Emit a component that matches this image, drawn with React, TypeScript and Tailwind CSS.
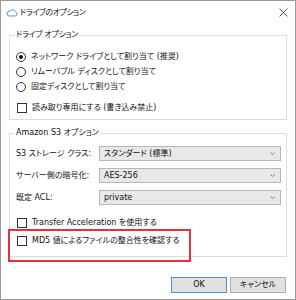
import React from "react";

function Radio({ checked }: { checked?: boolean }) {
  return (
    <span className="w-[10px] h-[10px] rounded-full border border-[#333] bg-white flex items-center justify-center shrink-0">
      {checked && <span className="w-[4px] h-[4px] rounded-full bg-[#111]" />}
    </span>
  );
}

function Check() {
  return <span className="w-[10px] h-[10px] border border-[#333] bg-white shrink-0" />;
}

function Select({ value }: { value: string }) {
  return (
    <div className="w-[182px] h-[15px] shrink-0 border border-[#b7b7b7] bg-[#e8e8e8] flex items-center justify-between pl-[4px] pr-[5px]">
      <span className="text-[8px] leading-none whitespace-nowrap">{value}</span>
      <svg width="5" height="3" viewBox="0 0 5 3"><path d="M0.5 0.5 L2.5 2.5 L4.5 0.5" fill="none" stroke="#777" strokeWidth="0.9" /></svg>
    </div>
  );
}

function Row({ children, className = "" }: { children: React.ReactNode; className?: string }) {
  return <label className={`h-[15px] flex items-center text-[8px] leading-none whitespace-nowrap ${className}`}>{children}</label>;
}

export default function App() {
  return (
    <div className="w-[296px] h-[300px] bg-white border border-[#9a9a9a] relative flex flex-col text-[#111] overflow-hidden font-['DejaVu_Sans','Noto_Sans_CJK_JP',sans-serif] [font-feature-settings:'palt']">
      <div className="h-[23px] flex items-center pl-[5px] pr-[7px] shrink-0">
        <svg width="12" height="9" viewBox="0 0 12 9" className="mr-[2px]">
          <path d="M3 8 H9.3 A2.1 2.1 0 0 0 9.5 3.9 A3 3 0 0 0 4 3.2 A2.4 2.4 0 0 0 3 8 Z" fill="none" stroke="#3a8ad8" strokeWidth="0.9" />
        </svg>
        <span className="text-[8px] leading-none tracking-[-0.5px]">ドライブのオプション</span>
        <svg width="9" height="9" viewBox="0 0 9 9" className="ml-auto">
          <path d="M0.5 0.5 L8.5 8.5 M8.5 0.5 L0.5 8.5" stroke="#444" strokeWidth="0.9" />
        </svg>
      </div>

      <div className="px-[8px] flex flex-col">
        <fieldset className="border border-[#dcdcdc] mt-[5px] pl-[6px] pr-[6px] pb-[4px]">
          <legend className="text-[8px] leading-[12px] px-[1px] -ml-[1px] tracking-[-0.3px]">ドライブ オプション</legend>
          <div className="flex flex-col mt-[8px]">
            <Row className="gap-[5px]"><Radio checked />ネットワーク ドライブとして割り当て (推奨)</Row>
            <Row className="gap-[5px]"><Radio />リムーバブル ディスクとして割り当て</Row>
            <Row className="gap-[5px]"><Radio />固定ディスクとして割り当て</Row>
            <Row className="gap-[5px] mt-[6px] pl-[1px]"><Check />読み取り専用にする (書き込み禁止)</Row>
          </div>
        </fieldset>

        <fieldset className="border border-[#dcdcdc] mt-[7px] pl-[6px] pr-[5px] pb-[8px]">
          <legend className="text-[8px] leading-[12px] px-[1px] -ml-[1px]">Amazon S3 オプション</legend>
          <div className="flex flex-col mt-[7px] gap-[7px]">
            <div className="flex items-center justify-between"><span className="text-[8px] whitespace-nowrap">S3 ストレージ クラス:</span><Select value="スタンダード (標準)" /></div>
            <div className="flex items-center justify-between"><span className="text-[8px] whitespace-nowrap">サーバー側の暗号化:</span><Select value="AES-256" /></div>
            <div className="flex items-center justify-between"><span className="text-[8px] whitespace-nowrap">既定 ACL:</span><Select value="private" /></div>
          </div>
          <div className="flex flex-col mt-[10px] pl-[1px]">
            <Row className="gap-[5px]"><Check />Transfer Acceleration を使用する</Row>
            <Row className="gap-[5px] mt-[3px]"><Check />MD5 値によるファイルの整合性を確認する</Row>
          </div>
        </fieldset>

        <div className="flex justify-end gap-[3px] mt-[20px] pr-[1px]">
          <button className="w-[56px] h-[16px] bg-[#e1e1e1] border border-[#4d90d6] text-[8px] leading-none">OK</button>
          <button className="w-[56px] h-[16px] bg-[#e1e1e1] border border-[#adadad] text-[8px] leading-none">キャンセル</button>
        </div>
      </div>

      <div className="absolute left-[7px] top-[228px] w-[183px] h-[33px] border-2 border-[#e2323e] pointer-events-none" />
    </div>
  );
}
